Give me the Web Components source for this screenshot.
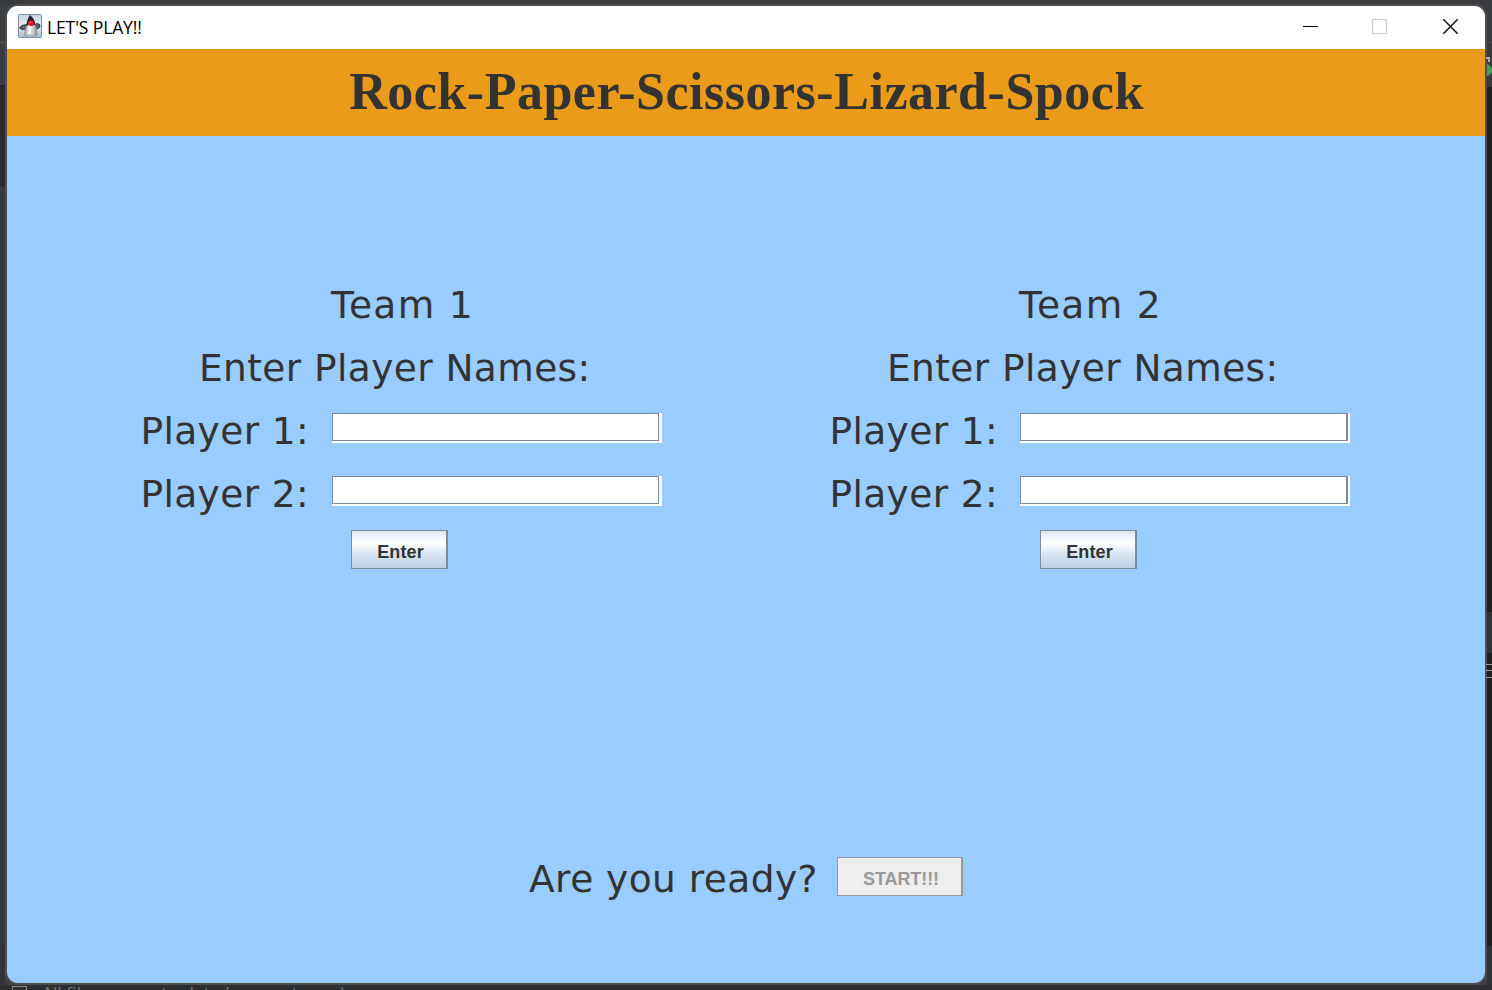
<!DOCTYPE html>
<html lang="en"><head><meta charset="utf-8"><title>LET'S PLAY!!</title>
<style>html,body{margin:0;height:100%;overflow:hidden;background:#2f3133}</style></head>
<body><game-desktop></game-desktop>
<script>
const define=(name,html)=>customElements.define(name,class extends HTMLElement{
  constructor(){super();const t=document.createElement('template');t.innerHTML=html;this.attachShadow({mode:'open'}).append(t.content.cloneNode(true));}
});

define('duke-icon',`<style>:host{display:block;width:24px;height:24px}svg{display:block}</style>
<svg width="24" height="24" viewBox="0 0 24 24">
<defs><linearGradient id="g" x2="0" y2="1"><stop stop-color="#c6d3df"/><stop offset=".5" stop-color="#e8eef3"/><stop offset="1" stop-color="#a9bccd"/></linearGradient>
<linearGradient id="b" x2="1"><stop stop-color="#999"/><stop offset=".4" stop-color="#fff"/><stop offset="1" stop-color="#888"/></linearGradient></defs>
<rect x=".5" y=".5" width="23" height="23" rx="1" fill="url(#g)" stroke="#7890a8"/>
<path d="M9 11Q4 10 1.5 14L4 15.5L8 15M16 11Q20 8 22 11Q22.5 14 19 15L17 14" fill="#5b6268" stroke="#30363b"/>
<path d="M9 10L17 10Q18 14 19 18Q20 21 18 22Q16 22 14.5 21.500Q11 20 9 22Q7 23 6.500 21Q7 15 9 10Z" fill="url(#b)" stroke="#777" stroke-width=".5"/>
<path d="M12 1Q9.500 4 8 12Q10 12 11 10Q14 13 17.500 10Q16 4 12 1Z" fill="#25272a"/>
<ellipse cx="13" cy="9.300" rx="2.900" ry="2.700" fill="#df1c1c"/><ellipse cx="12.400" cy="8.500" rx="1" ry=".8" fill="#ff5a4e"/></svg>`);

define('window-bar',`<style>:host{display:flex;align-items:center;height:43px;box-sizing:border-box;padding:0 26px 3px 11px;background:#fff;color:#000}
.title{margin:2px 0 0 5px;font:17.5px/24px "Open Sans",sans-serif;letter-spacing:-.12px;white-space:nowrap;flex:1}
svg{display:block}</style>
<duke-icon></duke-icon><span class="title"><slot></slot></span>
<svg width="157" height="17" viewBox="0 0 157 17" fill="none"><path d="M1 8.5h15" stroke="#000"/><rect x="70.5" y="1.5" width="14" height="14" rx="1" stroke="#ccc" stroke-width="1.2"/><path d="M141.3 1.3l14.4 14.4M155.7 1.3l-14.4 14.4" stroke="#111" stroke-width="1.5"/></svg>`);

define('game-banner',`<style>:host{display:flex;box-sizing:border-box;height:87px;padding:0 0 2px 1px;align-items:center;justify-content:center;background:#eb9b1a;color:#333}
h1{margin:0;font:bold 52px/60px "Liberation Serif",serif;letter-spacing:.52px;white-space:nowrap}</style><h1><slot></slot></h1>`);

define('game-label',`<style>:host{display:block;font:37.5px/63px "DejaVu Sans",sans-serif;letter-spacing:var(--track,.4px);color:#333;white-space:nowrap}</style><slot></slot>`);

define('name-field',`<style>:host{display:block;box-sizing:border-box;width:330px;height:30px;background:#fff;padding:0 var(--edge,3px) 2px 0}
div{box-sizing:border-box;height:28px;border:1px solid #7a8a99;border-right-width:var(--rim,1px)}</style><div></div>`);

define('metal-button',`<style>:host{display:block;box-sizing:border-box;width:97px;height:39px;border:1px solid #7a8a99;border-right-width:2px;background:linear-gradient(#dde8f3 0%,#fff 30%,#fff 34%,#dbe6f1 60%,#b8cfe5 100%);color:#333;font:bold 18px/43px "Liberation Sans",sans-serif;letter-spacing:.1px;text-align:center;padding-left:3px}
:host([disabled]){width:126px;border-color:#999;background:#eee;color:#999;letter-spacing:-.1px}</style><slot></slot>`);

define('team-form',`<style>:host{display:flex;flex-direction:column;width:521px}
.row{display:flex;align-items:flex-start}.row game-label{width:191px;text-indent:calc(var(--nudge,0px) - .6px)}
.team{padding-left:190px;--track:1.35px}.head{padding-left:58px;--track:.4px}name-field{margin-top:13px}metal-button{margin:4px 0 0 calc(210px + var(--nudge,0px))}</style>
<game-label class="team"><slot></slot></game-label><game-label class="head">Enter Player Names:</game-label>
<div class="row"><game-label>Player 1:</game-label><name-field></name-field></div>
<div class="row"><game-label>Player 2:</game-label><name-field></name-field></div>
<metal-button>Enter</metal-button>`);

define('ready-row',`<style>:host{display:flex;justify-content:center;align-items:flex-start}game-label{width:308px;--track:.45px}metal-button{margin-top:9px}</style>
<game-label>Are you ready?</game-label><metal-button disabled>START!!!</metal-button>`);

define('game-window',`<style>:host{display:flex;flex-direction:column;box-sizing:border-box;width:1482px;height:981px;border:2px solid #4c4d4e;border-radius:13px;overflow:hidden;background:#9cf}
main{flex:1;display:flex;flex-direction:column;padding:138px 0 72px;justify-content:space-between}
.teams{display:flex;gap:167px;padding-left:134px}.second{--rim:2px;--edge:2px;--nudge:1px}</style>
<window-bar>LET'S PLAY!!</window-bar><game-banner>Rock-Paper-Scissors-Lizard-Spock</game-banner>
<main><div class="teams"><team-form>Team 1</team-form><team-form class="second">Team 2</team-form></div><ready-row></ready-row></main>`);

define('game-desktop',`<style>:host{display:grid;grid-template-columns:5px 1482px 5px;grid-template-rows:4px 981px 5px;width:1492px;height:990px;overflow:hidden;
background:#3c3f41}
.top{grid-column:1/4;background:#393b3d}.left{background:linear-gradient(#3b3e40 0 38px,#555 38px 39px,#3b3e40 39px 81px,#242526 81px 83px,#2b2b2c 83px 183px,#373a3c 183px 941px,#292b2c 941px 942px,#323435 942px)}
.right{background:linear-gradient(#393c3e 0 38px,#4b4e50 38px 39px,#37393b 39px 83px,#202020 83px 608px,#303437 608px 649px,#202020 649px 942px,#303335 942px)}
.right svg{display:block;margin-left:-1px}
.status{grid-column:1/4;display:flex;background:#2d2f31;color:#77797a;overflow:hidden;font:17px/20px "Open Sans",sans-serif;white-space:nowrap}
.status i{display:block;box-sizing:border-box;width:15px;height:12px;margin:1px 15px 0 12px;border:1px solid #8b8b8b}.status span{letter-spacing:.15px;margin-top:-2px}</style>
<div class="top"></div><div class="left"></div><game-window></game-window>
<div class="right"><svg width="6" height="980"><path d="M0 54h3v4" stroke="#aaa" stroke-width="2" fill="none"/><path d="M1 59.500l5 4v5l-5 4" fill="#499c54"/><path d="M0 660.5h6M0 666.5h6M0 673.5h6" stroke="#999"/></svg></div>
<div class="status"><i></i><span>All files are up-to-date (moments ago)</span></div>`);
</script></body></html>
